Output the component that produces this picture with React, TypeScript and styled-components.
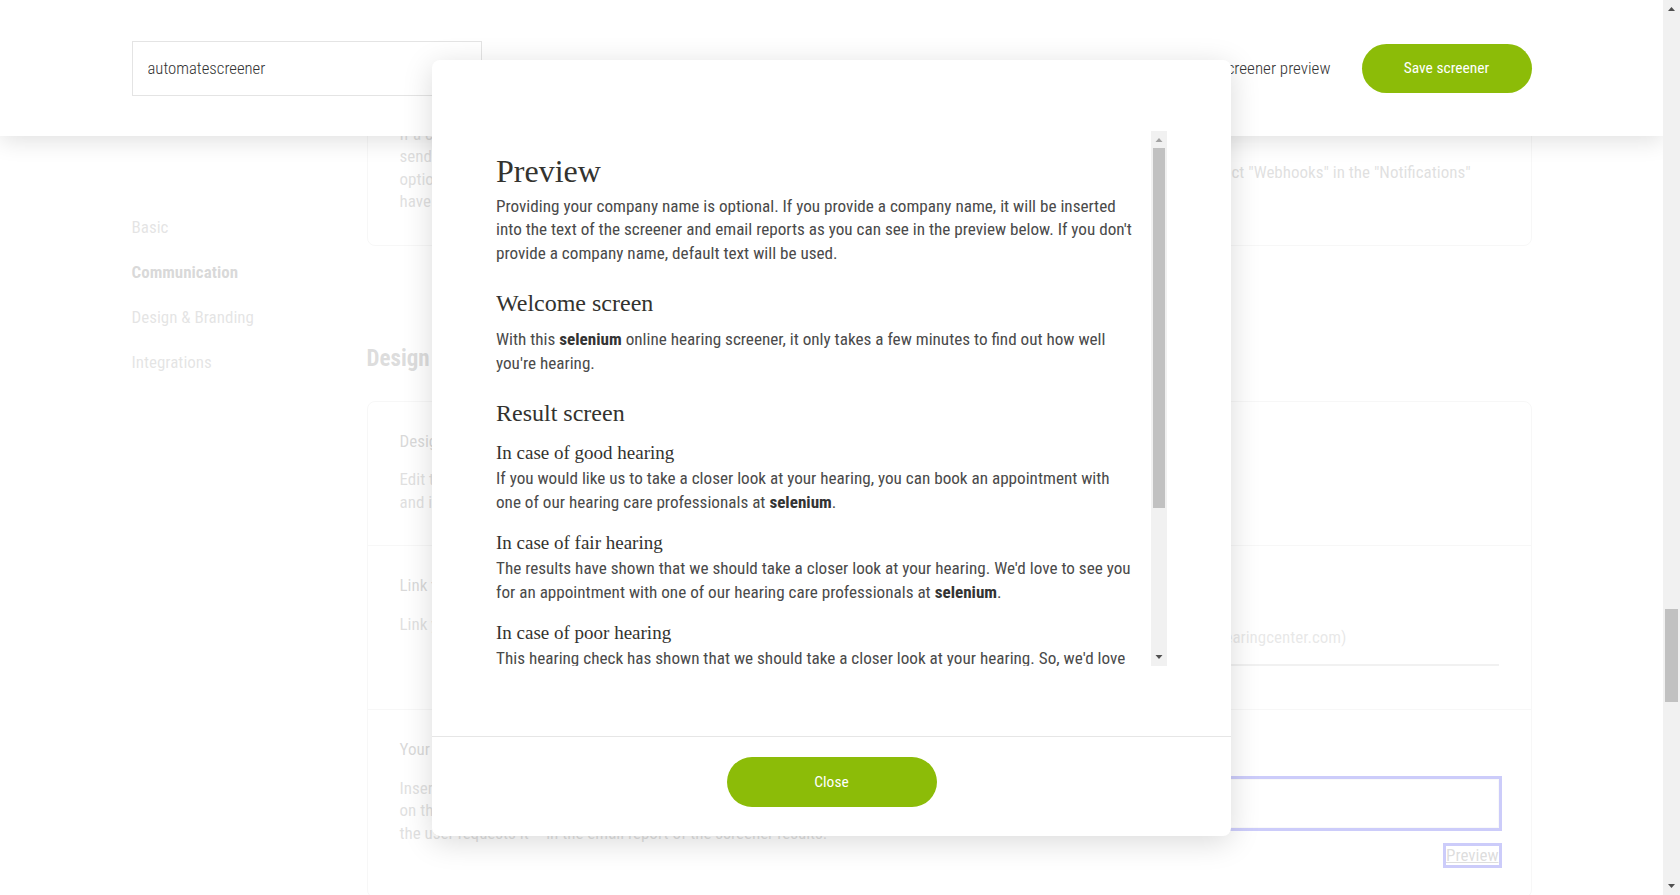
import React from 'react';
import styled, { createGlobalStyle } from 'styled-components';

/* ─────────────────────────── tokens ─────────────────────────── */
const GREEN = '#8cbc08';
const SANS = `"Roboto Condensed", "Liberation Sans", sans-serif`;
const SERIF = `"Liberation Serif", "DejaVu Serif", serif`;

const GlobalStyle = createGlobalStyle`
  * { box-sizing: border-box; }
  html, body { margin: 0; padding: 0; height: 100%; overflow: hidden; }
  body { font-family: ${SANS}; background: #fff; color: #444; }
  #root { height: 100%; }
`;

/* ─────────────────────────── shell ─────────────────────────── */
const Shell = styled.div`
  display: flex;
  height: 100vh;
`;

const Viewport = styled.div`
  position: relative;
  flex: 1;
  min-width: 0;
  overflow: hidden;
`;

const ScrollbarArt = styled.svg<{ $width: number }>`
  flex: none;
  display: block;
  width: ${(p) => p.$width}px;
  height: 100%;
`;

/* ─────────────────────────── top bar ─────────────────────────── */
const TopBar = styled.header`
  position: absolute;
  top: 0;
  left: 0;
  right: 0;
  z-index: 2;
  height: 136px;
  background: #fff;
  box-shadow: 0 5px 22px rgba(0, 0, 0, 0.12);
`;

const TopBarInner = styled.div`
  max-width: 1400px;
  height: 100%;
  margin: 0 auto;
  display: flex;
  align-items: center;
  justify-content: space-between;
`;

const NameInput = styled.input`
  width: 350px;
  height: 55px;
  padding: 0 15px;
  border: 1px solid #e4e4e4;
  font-family: ${SANS};
  font-weight: 300;
  font-size: 16.7px;
  color: #333;
  outline: none;
`;

const Actions = styled.div`
  display: flex;
  align-items: center;
  gap: 31px;
`;

const TextLink = styled.a`
  font-size: 17px;
  font-weight: 300;
  color: #333;
  text-decoration: none;
`;

const PillButton = styled.button<{ $width: number; $height: number }>`
  width: ${(p) => p.$width}px;
  height: ${(p) => p.$height}px;
  border: none;
  border-radius: ${(p) => p.$height / 2}px;
  background: ${GREEN};
  color: #fff;
  font-family: ${SANS};
  font-size: 15.5px;
  font-weight: 400;
  cursor: pointer;
`;

/* ─────────────────────────── page behind the dialog ─────────────────────────── */
const Page = styled.div`
  max-width: 1400px;
  margin: 0 auto;
  display: grid;
  grid-template-columns: 235px 1fr;
`;

const SideNav = styled.nav`
  padding-top: 216px;
  display: flex;
  flex-direction: column;
  align-items: flex-start;
  gap: 23px;
`;

const NavItem = styled.a<{ $active?: boolean }>`
  font-size: 17px;
  line-height: 22px;
  color: ${(p) => (p.$active ? '#444' : '#7a7a7a')};
  font-weight: ${(p) => (p.$active ? 700 : 400)};
  text-decoration: none;
`;

const Main = styled.main`
  padding-top: 10px;
`;

const SectionTitle = styled.h2`
  margin: 99px 0 29px;
  font-size: 23px;
  line-height: 27px;
  font-weight: 700;
  color: #555;
`;

const Card = styled.section`
  border: 1px solid #d6d6d6;
  border-radius: 8px;
`;

const Row = styled.div`
  display: grid;
  grid-template-columns: 1fr 1fr;
  column-gap: 64px;
  padding: 30px 32px 32px;

  & + & {
    border-top: 1px solid #d6d6d6;
  }
`;

const Column = styled.div`
  display: flex;
  flex-direction: column;
  min-width: 0;
`;

const RowLabel = styled.h4`
  margin: 0 0 17.5px;
  font-size: 17px;
  line-height: 19px;
  font-weight: 400;
  color: #444;
`;

const RowText = styled.p`
  margin: 0;
  font-size: 17px;
  line-height: 22.5px;
  color: #646464;
  white-space: nowrap;
`;

const HelpText = styled.p`
  margin: 19px 0 0;
  font-size: 17px;
  line-height: 22.5px;
  color: #646464;
  white-space: nowrap;
`;

const FieldLabel = styled.label`
  font-size: 15px;
  line-height: 19px;
  color: #646464;
`;

const LineInput = styled.input`
  height: 57px;
  margin: 14px 0 11px;
  padding: 0;
  border: none;
  border-bottom: 2px solid #bbb;
  font-family: ${SANS};
  font-size: 17px;
  color: #444;
  background: transparent;
  outline: none;

  &::placeholder {
    color: #8c8c8c;
  }
`;

const GhostButton = styled.button`
  align-self: flex-start;
  height: 49px;
  padding: 0 40px;
  border: 1px solid ${GREEN};
  border-radius: 25px;
  background: #fff;
  color: ${GREEN};
  font-family: ${SANS};
  font-size: 15.5px;
`;

const MessageBox = styled.textarea`
  height: 49px;
  margin-top: 19.5px;
  border: 1px solid #e0e0e0;
  outline: 3px solid #0000e6;
  resize: none;
  font-family: ${SANS};
  font-size: 17px;
`;

const PreviewLink = styled.a`
  align-self: flex-end;
  margin-top: 18px;
  font-size: 17px;
  line-height: 19px;
  color: #555;
  text-decoration: underline;
  outline: 3px solid #0000e6;
`;

/* ─────────────────────────── dialog ─────────────────────────── */
const Backdrop = styled.div`
  position: absolute;
  inset: 0;
  z-index: 1;
  background: rgba(255, 255, 255, 0.8);
`;

const ModalLayer = styled.div`
  position: absolute;
  inset: 0;
  z-index: 3;
  display: flex;
  align-items: center;
  justify-content: center;
`;

const Dialog = styled.div`
  width: 799px;
  height: 776px;
  display: flex;
  flex-direction: column;
  background: #fff;
  border-radius: 8px;
  box-shadow: 0 6px 30px rgba(0, 0, 0, 0.15);
  overflow: hidden;
`;

const DialogBody = styled.div`
  flex: 1;
  min-height: 0;
  padding: 71px 64px 70px;
`;

const ScrollFrame = styled.div`
  display: flex;
  height: 100%;
`;

const ScrollContent = styled.div`
  flex: 1;
  min-width: 0;
  overflow: hidden;
  padding: 21px 16px 21px 0;
`;

const Title = styled.h1`
  margin: 0 0 5px;
  font-family: ${SERIF};
  font-size: 32px;
  line-height: 38px;
  font-weight: 400;
  color: #33332f;
`;

const Heading = styled.h2`
  margin: 24px 0 10px;
  font-family: ${SERIF};
  font-size: 24px;
  line-height: 29px;
  font-weight: 400;
  color: #33332f;
`;

const SubHeading = styled.h3`
  margin: 17px 0 3px;
  font-family: ${SERIF};
  font-size: 19px;
  line-height: 23px;
  font-weight: 400;
  color: #33332f;

  ${Heading} + & {
    margin-top: 13px;
  }
`;

const Copy = styled.p`
  margin: 0;
  font-size: 17.15px;
  line-height: 23.5px;
  color: #4a4a4a;

  strong {
    font-weight: 700;
    color: #333;
  }
`;

const DialogFooter = styled.footer`
  display: flex;
  justify-content: center;
  padding: 20px 0 29px;
  border-top: 1px solid #e6e6e6;
`;

/* ─────────────────────────── data ─────────────────────────── */
const webhookLines = [
  'Webhooks let you forward the results of every completed screener',
  'automatically to another system, such as your CRM or booking tool.',
  'If a customer finishes the hearing screener, the system instantly',
  'sends a notification with the results to the URL you enter here.',
  'optional and only needed if you want to process the results further.',
  'have to set up the receiving endpoint yourself.',
];

const Lines: React.FC<{ lines: string[] }> = ({ lines }) => (
  <RowText>
    {lines.map((l, i) => (
      <React.Fragment key={i}>
        {i > 0 && <br />}
        {l}
      </React.Fragment>
    ))}
  </RowText>
);

/* classic scrollbar drawing: track, arrows and thumb */
const Scrollbar: React.FC<{
  width: number;
  height: number;
  thumbTop: number;
  thumbLength: number;
  upColor: string;
  downColor: string;
}> = ({ width, height, thumbTop, thumbLength, upColor, downColor }) => {
  const c = width / 2;
  return (
    <ScrollbarArt
      $width={width}
      viewBox={`0 0 ${width} ${height}`}
      preserveAspectRatio="none"
      aria-hidden="true"
    >
      <rect width={width} height={height} fill="#f1f1f1" />
      <path d={`M${c - 3.5} 11 L${c} 7 L${c + 3.5} 11 Z`} fill={upColor} />
      <rect x="2" y={thumbTop} width={width - 4} height={thumbLength} fill="#c1c1c1" />
      <path
        d={`M${c - 3.5} ${height - 11} L${c} ${height - 7} L${c + 3.5} ${height - 11} Z`}
        fill={downColor}
      />
    </ScrollbarArt>
  );
};

/* ─────────────────────────── component ─────────────────────────── */
const App: React.FC = () => (
  <Shell>
    <GlobalStyle />
    <Viewport>
      <Page>
        <SideNav>
          <NavItem href="#basic">Basic</NavItem>
          <NavItem href="#communication" $active>
            Communication
          </NavItem>
          <NavItem href="#design">Design &amp; Branding</NavItem>
          <NavItem href="#integrations">Integrations</NavItem>
        </SideNav>

        <Main>
          <Card>
            <Row>
              <Column>
                <RowLabel>Webhooks</RowLabel>
                <Lines lines={webhookLines} />
              </Column>
              <Column>
                <FieldLabel>Webhook URL</FieldLabel>
                <LineInput placeholder="https://" />
                <HelpText>
                  To activate webhooks in the app, select "Webhooks" in the "Notifications"
                </HelpText>
              </Column>
            </Row>
          </Card>

          <SectionTitle id="design">Design &amp; Branding</SectionTitle>

          <Card>
            <Row>
              <Column>
                <RowLabel>Design template</RowLabel>
                <Lines
                  lines={[
                    'Edit the colours, fonts and logo of your screener to match your brand',
                    'and its look and feel on your website.',
                  ]}
                />
              </Column>
              <Column>
                <GhostButton>Edit design</GhostButton>
              </Column>
            </Row>
            <Row>
              <Column>
                <RowLabel>Link to appointment booking</RowLabel>
                <Lines lines={['Link your screener to the online booking page of your store.']} />
              </Column>
              <Column>
                <FieldLabel>Booking page URL</FieldLabel>
                <LineInput placeholder="Booking link (e.g. https://www.yourhearingcenter.com)" />
              </Column>
            </Row>
            <Row>
              <Column>
                <RowLabel>Your personal message</RowLabel>
                <Lines
                  lines={[
                    'Insert a personal message that will be shown to the user on the result screen',
                    'on the last page of the screener and – if',
                    'the user requests it – in the email report of the screener results.',
                  ]}
                />
              </Column>
              <Column>
                <FieldLabel>Message</FieldLabel>
                <MessageBox />
                <PreviewLink href="#preview">Preview</PreviewLink>
              </Column>
            </Row>
          </Card>
        </Main>
      </Page>

      <Backdrop />

      <TopBar>
        <TopBarInner>
          <NameInput defaultValue="automatescreener" />
          <Actions>
            <TextLink href="#preview">Screener preview</TextLink>
            <PillButton $width={170} $height={49}>
              Save screener
            </PillButton>
          </Actions>
        </TopBarInner>
      </TopBar>

      <ModalLayer>
        <Dialog role="dialog">
          <DialogBody>
            <ScrollFrame>
              <ScrollContent>
                <Title>Preview</Title>
                <Copy>
                  Providing your company name is optional. If you provide a company name, it will be
                  inserted into the text of the screener and email reports as you can see in the
                  preview below. If you don't provide a company name, default text will be used.
                </Copy>

                <Heading>Welcome screen</Heading>
                <Copy>
                  With this <strong>selenium</strong> online hearing screener, it only takes a few
                  minutes to find out how well you're hearing.
                </Copy>

                <Heading>Result screen</Heading>
                <SubHeading>In case of good hearing</SubHeading>
                <Copy>
                  If you would like us to take a closer look at your hearing, you can book an
                  appointment with one of our hearing care professionals at{' '}
                  <strong>selenium</strong>.
                </Copy>
                <SubHeading>In case of fair hearing</SubHeading>
                <Copy>
                  The results have shown that we should take a closer look at your hearing. We'd
                  love to see you for an appointment with one of our hearing care professionals at{' '}
                  <strong>selenium</strong>.
                </Copy>
                <SubHeading>In case of poor hearing</SubHeading>
                <Copy>
                  This hearing check has shown that we should take a closer look at your hearing.
                  So, we'd love to see you for an appointment with one of our hearing care
                  professionals at <strong>selenium</strong>.
                </Copy>
              </ScrollContent>
              <Scrollbar
                width={16}
                height={535}
                thumbTop={17}
                thumbLength={360}
                upColor="#a3a3a3"
                downColor="#505050"
              />
            </ScrollFrame>
          </DialogBody>
          <DialogFooter>
            <PillButton $width={210} $height={50}>
              Close
            </PillButton>
          </DialogFooter>
        </Dialog>
      </ModalLayer>
    </Viewport>

    <Scrollbar
      width={17}
      height={895}
      thumbTop={609}
      thumbLength={93}
      upColor="#505050"
      downColor="#505050"
    />
  </Shell>
);

export default App;
